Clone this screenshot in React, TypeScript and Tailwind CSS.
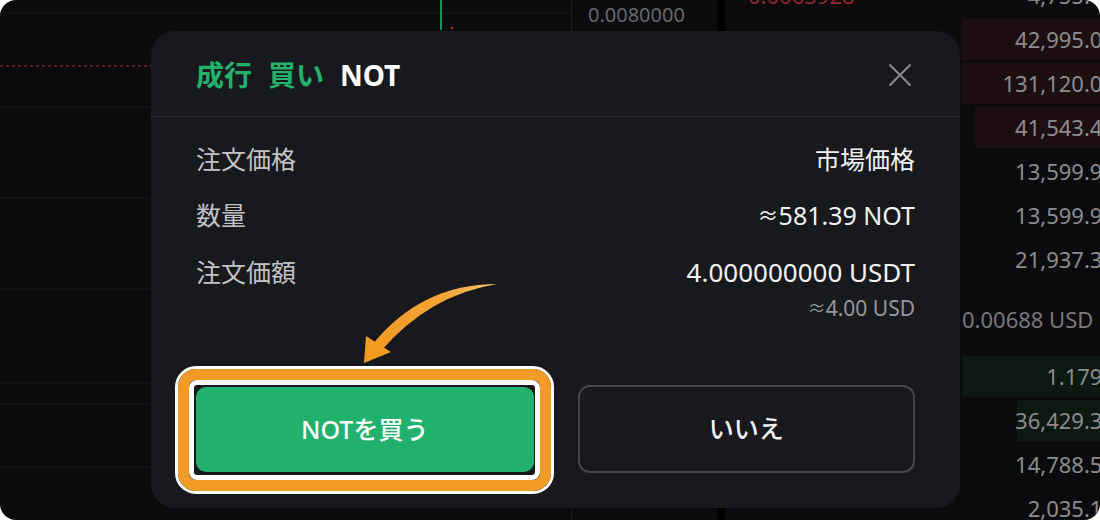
import { X } from 'lucide-react'

type BookRow = {
  text: string
  bar?: 'ask' | 'bid'
  barFrom?: string
  left?: string
}

// rows above the mid price (first one is cut by the frame top)
const asks: BookRow[] = [
  { text: '4,755.00', left: '0.0063928' },
  { text: '42,995.00', bar: 'ask', barFrom: 'ml-[237px]' },
  { text: '131,120.00', bar: 'ask', barFrom: 'ml-[237px]' },
  { text: '41,543.40', bar: 'ask', barFrom: 'ml-[250px]' },
  { text: '13,599.90' },
  { text: '13,599.90' },
  { text: '21,937.30' },
]

const bids: BookRow[] = [
  { text: '1.1790', bar: 'bid', barFrom: 'ml-[237px]' },
  { text: '36,429.30', bar: 'bid', barFrom: 'ml-[292px]' },
  { text: '14,788.50' },
  { text: '2,035.10' },
]

function BookLine({ row }: { row: BookRow }) {
  return (
    <div className="relative flex h-[44px] shrink-0 items-start">
      {row.bar && (
        <div
          className={`absolute inset-y-0 bottom-[3px] right-0 left-0 ${row.barFrom} ${
            row.bar === 'ask' ? 'bg-[#1d0f11]' : 'bg-[#0c1812]'
          }`}
        />
      )}
      {row.left && (
        <span className="relative ml-[23px] flex h-[41px] items-center text-[22px] text-[#8f2a2e]">
          {row.left}
        </span>
      )}
      <span className="relative ml-auto flex h-[41px] items-center text-[22px] text-[#8c8c8e]">
        {row.text}
      </span>
    </div>
  )
}

function ChartBackdrop() {
  return (
    <svg width="571" height="520" viewBox="0 0 571 520" className="block shrink-0">
      {[13, 107, 198, 289, 383, 404, 467].map((y) => (
        <line key={y} x1="0" x2="571" y1={y} y2={y} stroke="#141518" strokeWidth="1.5" />
      ))}
      <line x1="0" x2="571" y1="66" y2="66" stroke="#5c1b1f" strokeWidth="2" strokeDasharray="3 3" />
      <line x1="441" x2="441" y1="0" y2="30" stroke="#1f8c55" strokeWidth="2" />
      <circle cx="452" cy="28" r="1.6" fill="#8a2a2c" />
    </svg>
  )
}

function HighlightRing() {
  return (
    <div className="pointer-events-none absolute -top-[21px] -bottom-[21px] -left-[21px] -right-[20px] rounded-[21px] border-[3px] border-white">
      <div className="h-full w-full rounded-[18px] border-[11px] border-[#f29b26]">
        <div className="h-full w-full rounded-[8px] border-[5px] border-white" />
      </div>
    </div>
  )
}

function CurvedArrow() {
  return (
    <svg
      className="pointer-events-none absolute left-[355px] top-[278px]"
      width="150"
      height="92"
      viewBox="355 278 150 92"
    >
      <defs>
        <linearGradient id="arrowFill" x1="496" y1="284" x2="370" y2="360" gradientUnits="userSpaceOnUse">
          <stop offset="0" stopColor="#f8c070" />
          <stop offset="0.35" stopColor="#f4a436" />
          <stop offset="1" stopColor="#f29a22" />
        </linearGradient>
      </defs>
      <path d="M497 284 Q421 284 372 345 L381 351 Q429 295 497 284 Z" fill="url(#arrowFill)" />
      <path d="M364 363 L366 336 L391 352 Z" fill="#f29a22" />
    </svg>
  )
}

export default function App() {
  return (
    <div className="h-[520px] w-[1100px] bg-white [font-family:'Noto_Sans','Noto_Sans_CJK_JP',sans-serif]">
      <div className="relative flex h-[520px] w-[1100px] overflow-hidden rounded-[16px] bg-[#0b0b0d]">
        {/* chart */}
        <ChartBackdrop />

        {/* price axis */}
        <div className="w-[146px] shrink-0 border-l border-[#1c1d21] pl-[16px]">
          <div className="flex h-[30px] items-center text-[20px] text-[#67686b]">0.0080000</div>
        </div>
        <div className="w-[8px] shrink-0 bg-black" />

        {/* order book */}
        <div className="-mt-[25px] flex w-[390px] shrink-0 flex-col">
          {asks.map((row, i) => (
            <BookLine key={'a' + i} row={row} />
          ))}
          <div className="flex h-[73px] shrink-0 items-center pl-[237px] text-[22px] text-[#78797c]">
            0.00688 USD
          </div>
          {bids.map((row, i) => (
            <BookLine key={'b' + i} row={row} />
          ))}
        </div>

        {/* confirm dialog */}
        <div className="absolute left-[151px] top-[31px] flex h-[477px] w-[809px] flex-col rounded-[24px] bg-[#18191c]">
          <div className="flex h-[86px] items-center justify-between border-b border-[#27282c] pl-[45px] pr-[40px] pt-[2px]">
            <div className="flex items-center gap-[16px] text-[28px] font-bold">
              <span className="text-[#22b06b]">成行</span>
              <span className="text-[#22b06b]">買い</span>
              <span className="text-white">NOT</span>
            </div>
            <X className="h-[40px] w-[40px] text-[#8b8c90]" strokeWidth={1.2} />
          </div>

          <div className="flex flex-col px-[45px] pt-[15px]">
            <div className="flex h-[56px] items-center justify-between">
              <span className="text-[25px] text-[#c2c3c6]">注文価格</span>
              <span className="text-[25px] text-[#f2f2f3]">市場価格</span>
            </div>
            <div className="flex h-[56px] items-center justify-between">
              <span className="text-[25px] text-[#c2c3c6]">数量</span>
              <span className="flex items-center text-[25px] text-[#f2f2f3]">
                <span className="text-[21px]">≈</span>581.39 NOT
              </span>
            </div>
            <div className="flex items-start justify-between pt-[12px]">
              <span className="text-[25px] leading-[32px] text-[#c2c3c6]">注文価額</span>
              <div className="flex flex-col items-end">
                <span className="text-[26px] leading-[32px] text-[#f2f2f3]">4.000000000 USDT</span>
                <span className="mt-[6px] flex items-center text-[21px] leading-[28px] text-[#97989b]">
                  <span className="text-[18px]">≈</span>4.00 USD
                </span>
              </div>
            </div>

            <div className="mt-[65px] grid grid-cols-2 gap-[44px]">
              <div className="relative">
                <button className="flex h-[85px] w-full items-center justify-center rounded-[10px] bg-[#21b16c] text-[25px] font-medium text-white">
                  NOTを買う
                </button>
                <HighlightRing />
              </div>
              <button className="-mt-[2px] flex h-[88px] w-full items-center justify-center rounded-[12px] border-2 border-[#45464b] text-[25px] font-medium text-[#f2f2f3]">
                いいえ
              </button>
            </div>
          </div>
        </div>

        <CurvedArrow />
      </div>
    </div>
  )
}
